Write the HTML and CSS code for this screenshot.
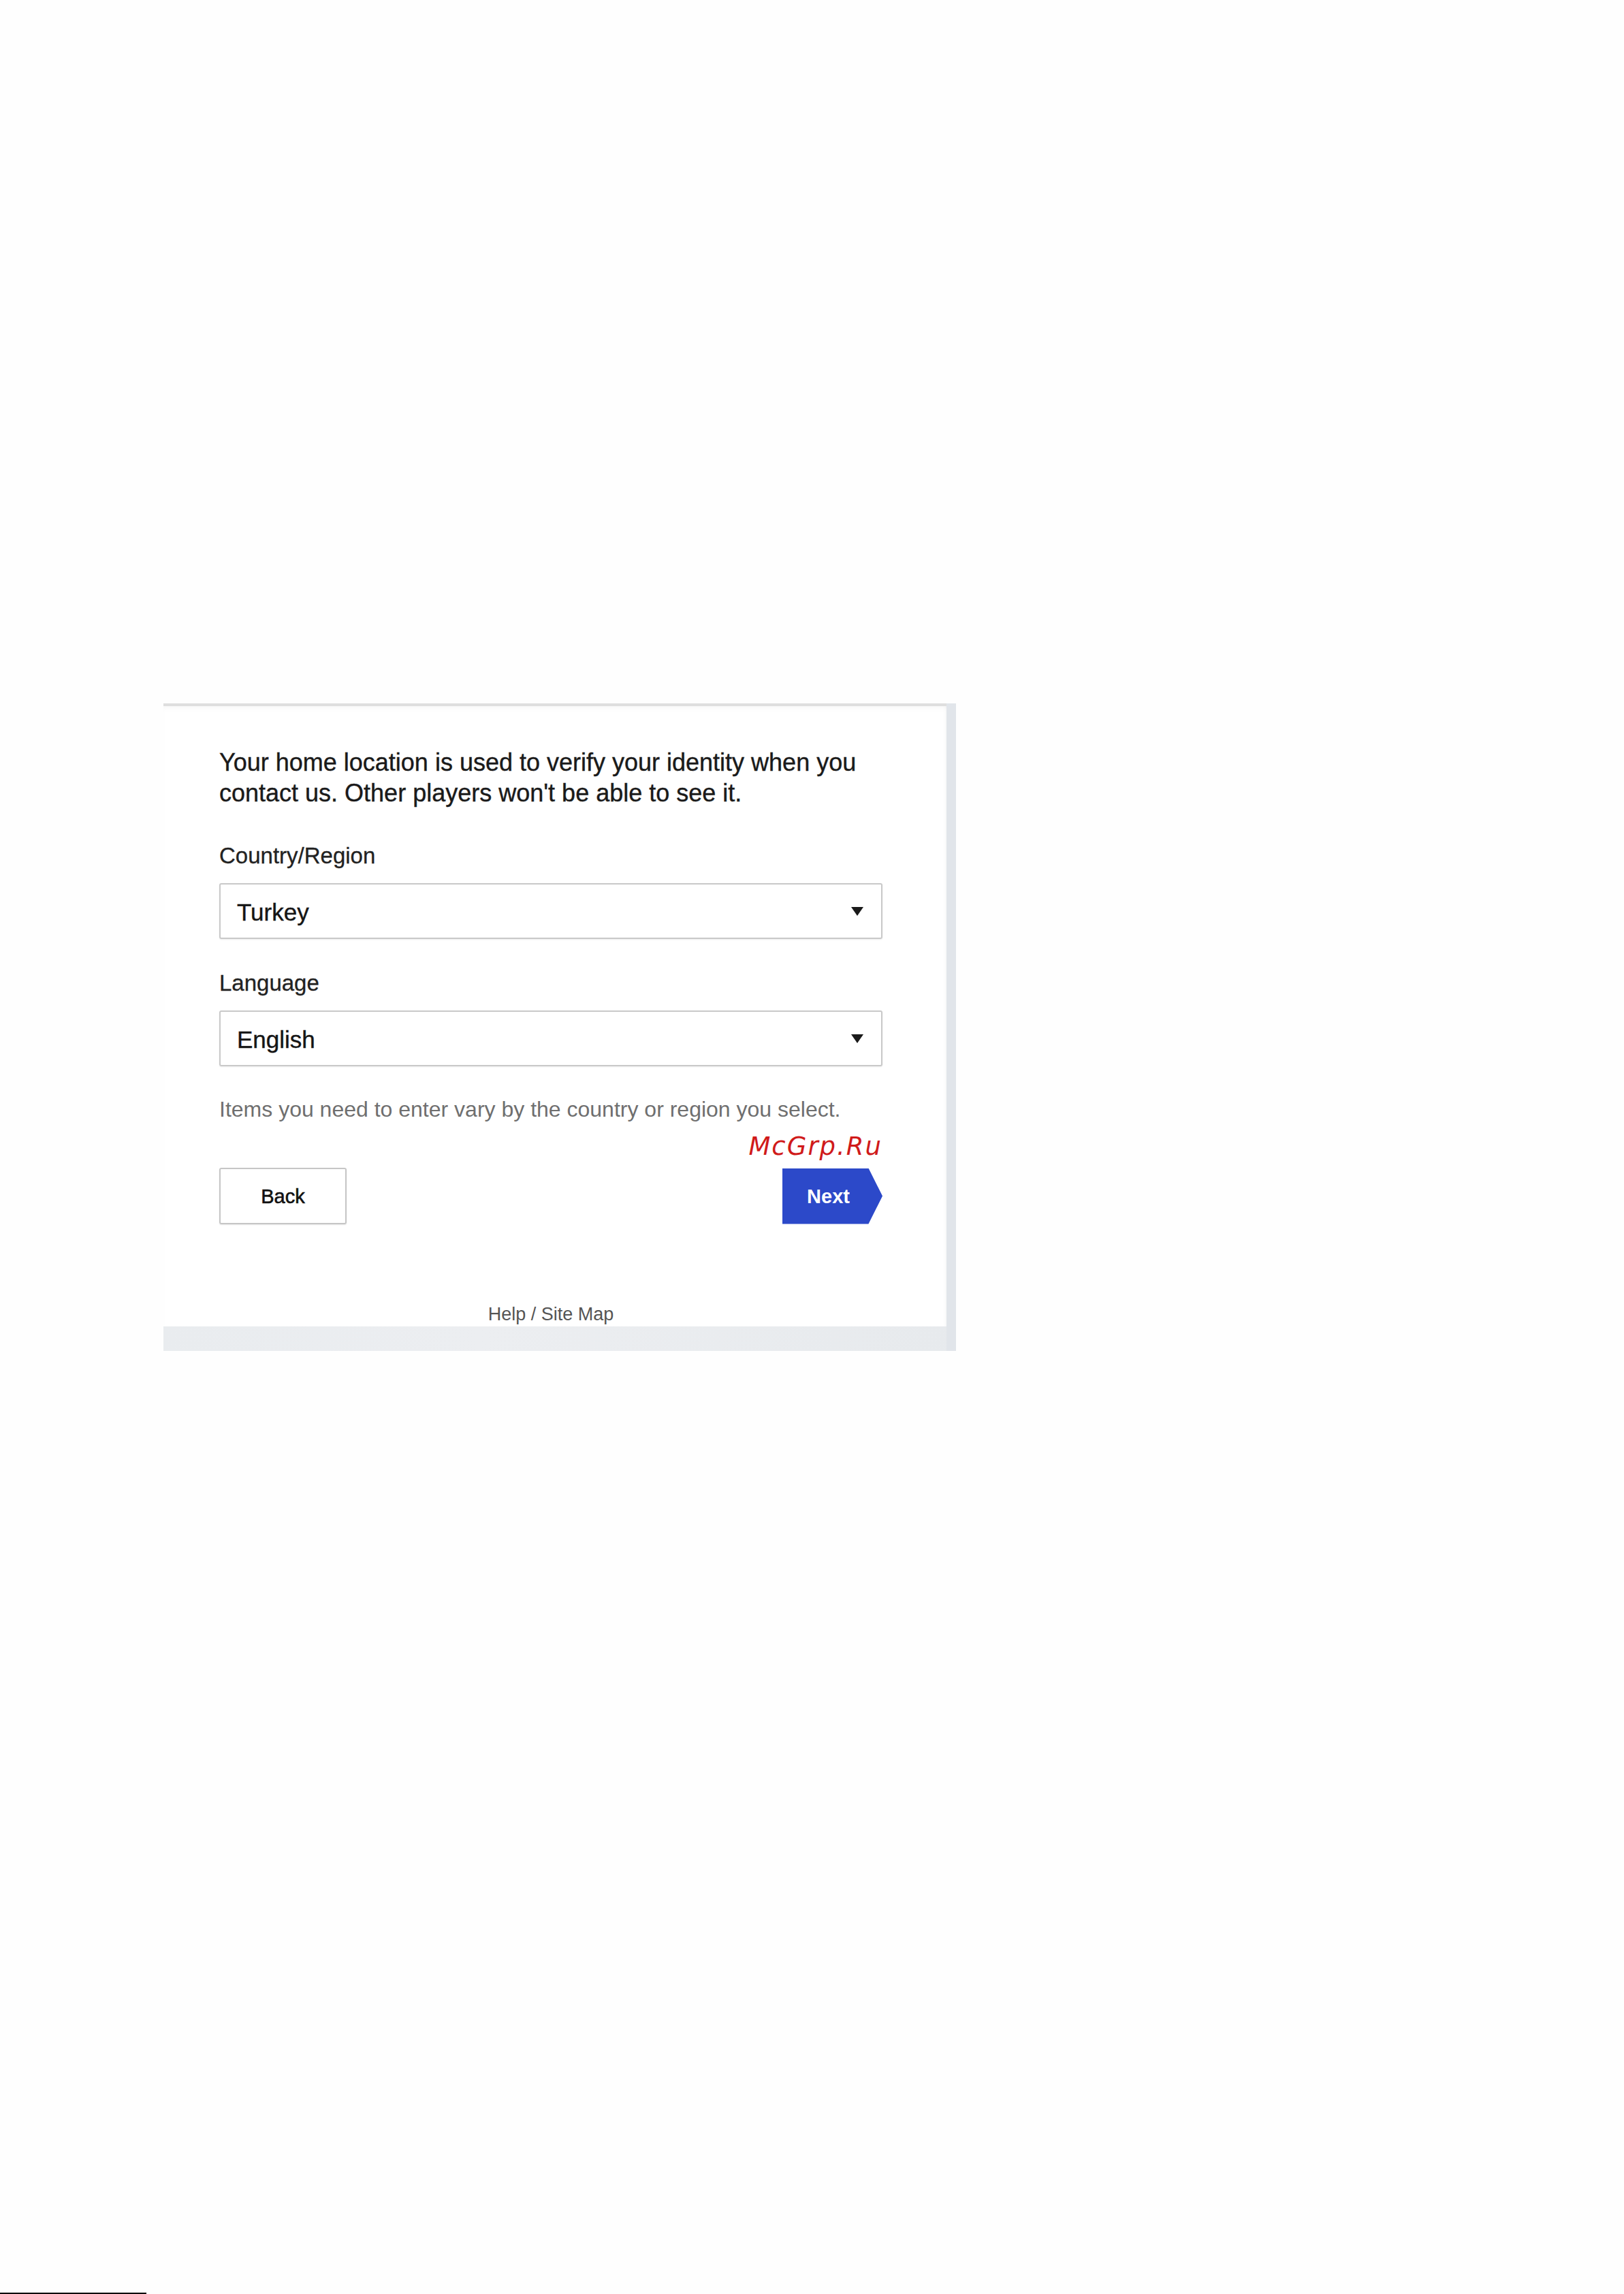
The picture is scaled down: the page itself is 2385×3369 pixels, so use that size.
FILE: index.html
```html
<!DOCTYPE html>
<html lang="en">
<head>
<meta charset="utf-8">
<title>Home location</title>
<link rel="stylesheet" href="styles.css">
</head>
<body>
<div class="page">
  <div class="panel">
    <div class="card">
      <div class="content">
        <p class="intro">Your home location is used to verify your identity when you contact us. Other players won't be able to see it.</p>

        <div class="label first">Country/Region</div>
        <div class="select">
          <span class="value">Turkey</span>
          <span class="caret"></span>
        </div>

        <div class="label">Language</div>
        <div class="select">
          <span class="value">English</span>
          <span class="caret"></span>
        </div>

        <p class="hint">Items you need to enter vary by the country or region you select.</p>

        <div class="actions">
          <div class="btn-back">Back</div>
          <div class="btn-next">Next</div>
          <div class="watermark">McGrp.Ru</div>
        </div>

        <div class="help">Help / Site Map</div>
      </div>
    </div>
    <div class="stripe"></div>
  </div>
  <div class="spacer"></div>
  <div class="rule"></div>
</div>
</body>
</html>
```

FILE: styles.css
```css
html, body {
  margin: 0;
  padding: 0;
  background: #fefefe;
}

.page {
  height: 3369px;
  display: flex;
  flex-direction: column;
  overflow: hidden;
  font-family: "Liberation Sans", Arial, sans-serif;
  color: #1c1c1c;
}

.panel {
  margin-top: 1033px;
  margin-left: 240px;
  width: 1164px;
  height: 951px;
  display: flex;
  background: linear-gradient(90deg, #e9ecef 0%, #eceef1 40%, #e7eaed 100%);
}

.card {
  width: 1150px;
  height: 915px;
  background: #ffffff;
  border-top: 4px solid #dedede;
  box-sizing: border-box;
  box-shadow: inset 0 6px 8px -4px rgba(0, 0, 0, 0.04), inset -4px 0 6px -4px rgba(0, 0, 0, 0.05);
}

.stripe {
  width: 14px;
  background: #e1e5ea;
}

.content {
  width: 974px;
  margin-left: 82px;
  padding-top: 60px;
}

.intro {
  margin: 0;
  font-size: 36px;
  line-height: 45px;
  color: #1a1a1a;
  -webkit-text-stroke: 0.4px #1a1a1a;
}

.label {
  margin-top: 45px;
  font-size: 33px;
  line-height: 40px;
  color: #222;
  -webkit-text-stroke: 0.3px #222;
}

.label.first {
  margin-top: 50px;
}

.select {
  margin-top: 20px;
  height: 82px;
  box-sizing: border-box;
  border: 2px solid #c9c9c9;
  border-radius: 3px;
  box-shadow: 0 1px 2px rgba(0, 0, 0, 0.08);
  display: flex;
  align-items: center;
  justify-content: space-between;
  padding: 3px 26px 0 24px;
}

.value {
  font-size: 35px;
  line-height: 40px;
  color: #151515;
  -webkit-text-stroke: 0.4px #151515;
}

.caret {
  width: 0;
  height: 0;
  border-left: 9px solid transparent;
  border-right: 9px solid transparent;
  border-top: 13px solid #1a1a1a;
  margin-top: -3px;
}

.hint {
  margin: 44px 0 0;
  font-size: 32px;
  line-height: 38px;
  color: #6f6f6f;
}

.actions {
  position: relative;
  margin-top: 67px;
  display: flex;
  justify-content: space-between;
  align-items: center;
}

.btn-back {
  width: 187px;
  height: 83px;
  box-sizing: border-box;
  border: 2px solid #c6c6c6;
  border-radius: 3px;
  box-shadow: 0 1px 2px rgba(0, 0, 0, 0.1);
  display: flex;
  align-items: center;
  justify-content: center;
  font-size: 29px;
  line-height: 34px;
  color: #111;
  -webkit-text-stroke: 0.6px #111;
}

.btn-next {
  width: 147px;
  height: 82px;
  background: #2c49c9;
  clip-path: polygon(0 0, 86% 0, 100% 50%, 86% 100%, 0 100%);
  display: flex;
  align-items: center;
  justify-content: center;
  padding-right: 12px;
  box-sizing: border-box;
  font-size: 29px;
  line-height: 34px;
  font-weight: bold;
  color: #ffffff;
}

.watermark {
  position: absolute;
  right: 0;
  top: -53px;
  font-family: "DejaVu Sans", sans-serif;
  font-style: oblique;
  font-size: 37px;
  line-height: 44px;
  letter-spacing: 2px;
  color: #d01a1a;
}

.help {
  margin-top: 116px;
  text-align: center;
  font-size: 27px;
  line-height: 32px;
  color: #555;
}

.spacer {
  flex: 1;
}

.rule {
  width: 215px;
  height: 2px;
  background: #000;
}
```
